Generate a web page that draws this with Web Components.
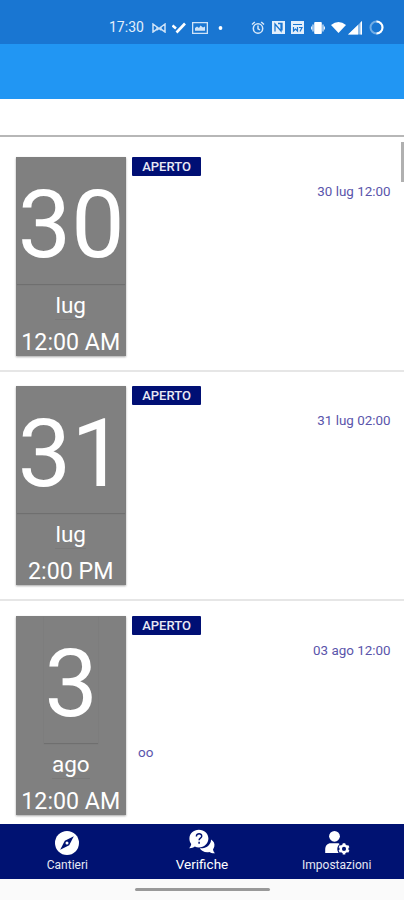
<!DOCTYPE html>
<html lang="it">
<head>
<meta charset="utf-8">
<meta name="viewport" content="width=device-width, initial-scale=1">
<title>Verifiche</title>
<style>
  html, body { height: 100%; }
  body {
    margin: 0;
    overflow: hidden;
    background: #fff;
    font-family: Roboto, "Liberation Sans", sans-serif;
  }
</style>
</head>
<body>
<app-screen>
  <status-bar slot="top" time="17:30"></status-bar>
  <check-item day="30" month="lug" time="12:00 AM" state="APERTO" date="30 lug 12:00"></check-item>
  <check-item day="31" month="lug" time="2:00 PM" state="APERTO" date="31 lug 02:00"></check-item>
  <check-item day="3" month="ago" time="12:00 AM" state="APERTO" date="03 ago 12:00">oo</check-item>
  <tab-bar slot="bottom">
    <tab-item icon="compass">Cantieri</tab-item>
    <tab-item icon="chat" active>Verifiche</tab-item>
    <tab-item icon="user">Impostazioni</tab-item>
  </tab-bar>
</app-screen>

<script>
class AppScreen extends HTMLElement {
  constructor() {
    super();
    this.attachShadow({ mode: "open" });
  }

  static get styles() {
    return /* css */`
      :host {
        display: flex;
        flex-direction: column;
        height: 900px;
        background: #fff;
      }

      .toolbar {
        flex: none;
        height: 55px;
        background: #2196f3;
      }

      .search {
        flex: none;
        box-sizing: border-box;
        height: 38px;
        border-bottom: 2px solid #b7b7b7;
      }

      .list {
        flex: 1;
        min-height: 0;
        overflow: hidden;
        position: relative;
      }

      .thumb {
        position: absolute;
        top: 5px;
        right: 0;
        width: 3px;
        height: 40px;
        background: #b0b0b0;
      }

      .gesture {
        flex: none;
        height: 21px;
        display: flex;
        justify-content: center;
        align-items: center;
        background: #fafafa;
      }

      .gesture span {
        width: 135px;
        height: 3px;
        border-radius: 2px;
        background: #999;
      }
    `;
  }

  connectedCallback() {
    this.shadowRoot.innerHTML = /* html */`
    <style>${AppScreen.styles}</style>
    <slot name="top"></slot>
    <div class="toolbar"></div>
    <div class="search"></div>
    <div class="list"><slot></slot><div class="thumb"></div></div>
    <slot name="bottom"></slot>
    <div class="gesture"><span></span></div>`;
  }
}

class StatusBar extends HTMLElement {
  constructor() {
    super();
    this.attachShadow({ mode: "open" });
  }

  static get styles() {
    return /* css */`
      :host {
        flex: none;
        box-sizing: border-box;
        height: 44px;
        padding: 11px 20px 0 109px;
        display: flex;
        justify-content: space-between;
        background: #1976d2;
        color: #e3effb;
        font-size: 14px;
        line-height: 33px;
      }

      div {
        display: flex;
        align-items: center;
        height: 33px;
      }

      .left svg { margin-right: 6px; }
      .right { gap: 6.5px; }
      .right .signal { margin-left: -5px; }
      time { margin-right: 8px; }
      svg { display: block; }
    `;
  }

  connectedCallback() {
    this.shadowRoot.innerHTML = /* html */`
    <style>${StatusBar.styles}</style>
    <div class="left">
      <time>${this.getAttribute("time")}</time>
      <svg width="14" height="10" viewBox="0 0 14 10" fill="none" stroke="#cfe3f7" stroke-width="1.5"><path d="M1 1l4 3v2L1 9zM13 1L9 4v2l4 3zM5 4l4 3M9 4L5 7"/></svg>
      <svg width="14" height="12" viewBox="0 0 14 12" fill="none" stroke="#fff" stroke-width="2.6"><path d="M.5 3.500L4 6.500M4.500 10.500l8.500-9"/></svg>
      <svg width="16" height="12" viewBox="0 0 16 12" fill="none" stroke="#cfe3f7" stroke-width="1.4"><path d="M.6.6h14.800v10.800H.6z"/><path d="M3 8.700V6l2-1.500 2 1.500 1.500-2.500L11 5.500l2-1v4.200z" fill="#cfe3f7" stroke="none"/></svg>
      <svg width="16" height="6" viewBox="0 0 16 6"><circle cx="6.5" cy="3" r="1.9" fill="#fff"/></svg>
    </div>
    <div class="right">
      <svg width="14" height="14" viewBox="0 0 14 14" fill="none" stroke="#d9e9f9" stroke-width="1.5"><circle cx="7" cy="7.5" r="4.7"/><path d="M7 4.500v3.300l2 1M1 3.500L3.800 1M13 3.500L10.200 1"/></svg>
      <svg width="13" height="13" viewBox="0 0 13 13"><path d="M0 0h13v13H0z" fill="#e3effb"/><path d="M3 10.500V3l6 7V2.500M6 2.500h4v7" fill="none" stroke="#1976d2" stroke-width="1.3"/></svg>
      <svg width="13" height="13" viewBox="0 0 13 13"><path d="M0 0h13v13H0z" fill="#e3effb"/><path d="M2 3.500h9M2.500 6v4l2-2 2 2V6M8 6.500h3l-2 4" fill="none" stroke="#1976d2" stroke-width="1.2"/></svg>
      <svg width="14" height="12" viewBox="0 0 14 12"><rect x="3.2" y="0" width="7.6" height="12" rx="1" fill="#fff"/><path d="M2 2.500v7M12 2.500v7M.5 4.500v3M13.500 4.500v3" stroke="#e3effb" stroke-width="1.2"/></svg>
      <svg width="15" height="11" viewBox="0 0 15 11"><path d="M0 3Q7.500-3 15 3L7.500 11z" fill="#fff"/></svg>
      <svg class="signal" width="15" height="14" viewBox="0 0 15 14"><path d="M0 13.500L14 0v13.500z" fill="#8cbbe9"/><path d="M0 13.500L10 4v9.500zM12.500 1.500L14 0v13.500h-1.500z" fill="#fff"/></svg>
      <svg width="15" height="15" viewBox="0 0 15 15" fill="none" stroke-width="2"><circle cx="7.5" cy="7.5" r="6" stroke="#72ade5"/><path d="M7.500 1.500a6 6 0 0 1 0 12" stroke="#fff"/></svg>
    </div>`;
  }
}

class CheckItem extends HTMLElement {
  constructor() {
    super();
    this.attachShadow({ mode: "open" });
  }

  static get styles() {
    return /* css */`
      :host {
        box-sizing: border-box;
        height: 229.3px;
        padding: 14.3px 13.5px 0 15.5px;
        display: flex;
        gap: 6px;
        border-bottom: 2px solid #e6e6e6;
      }

      :host(:first-of-type) { margin-top: 5.7px; }
      :host(:last-of-type) { border-bottom: 0; }

      .card {
        flex: none;
        width: 110.5px;
        height: 199px;
        display: flex;
        flex-direction: column;
        align-items: center;
        background: #808080;
        color: #fff;
        box-shadow: 0 1px 2px rgba(0, 0, 0, .35);
        font-size: 23.2px;
        white-space: nowrap;
      }

      .day {
        height: 127px;
        line-height: 136px;
        font-size: 95px;
        text-indent: 1px;
        box-shadow: 0 1px 1px rgba(0, 0, 0, .13);
      }

      .month {
        height: 35px;
        line-height: 42px;
        font-size: 22.5px;
        border-bottom: 1px solid #797979;
      }

      .time {
        margin-top: 8px;
        line-height: 28px;
      }

      .body {
        flex: 1;
        display: flex;
        flex-direction: column;
      }

      .badge {
        align-self: flex-start;
        width: 69px;
        height: 19px;
        border-radius: 1px;
        background: #000f74;
        color: #e8e9f5;
        font-size: 13px;
        font-weight: 500;
        line-height: 20px;
        text-align: center;
      }

      .date {
        align-self: flex-end;
        margin-top: 7px;
        font-size: 13.4px;
        line-height: 17px;
        color: #5a55ab;
      }

      .note {
        margin: 85px 0 0 6px;
        font-size: 13.5px;
        line-height: 16px;
        color: #5a55ab;
      }
    `;
  }

  connectedCallback() {
    const attr = name => this.getAttribute(name);
    this.shadowRoot.innerHTML = /* html */`
    <style>${CheckItem.styles}</style>
    <div class="card">
      <div class="day">${attr("day")}</div>
      <div class="month">${attr("month")}</div>
      <div class="time">${attr("time")}</div>
    </div>
    <div class="body">
      <div class="badge">${attr("state")}</div>
      <div class="date">${attr("date")}</div>
      <div class="note"><slot></slot></div>
    </div>`;
  }
}

class TabBar extends HTMLElement {
  constructor() {
    super();
    this.attachShadow({ mode: "open" });
  }

  connectedCallback() {
    this.shadowRoot.innerHTML = /* html */`
    <style>
      :host {
        flex: none;
        height: 55px;
        display: flex;
        background: #001272;
        color: #e6e8f4;
      }
    </style>
    <slot></slot>`;
  }
}

const ICONS = {
  compass: /* html */`<svg width="26" height="26" viewBox="0 0 26 26"><circle cx="13" cy="13" r="12" fill="#fff"/><path d="M19.800 6.200l-4.600 9-9 4.600 4.600-9z" fill="#001272"/><circle cx="13" cy="13" r="1.5" fill="#fff"/></svg>`,
  chat: /* html */`<svg width="26" height="26" viewBox="0 0 26 26"><path d="M22 10.500c2.800 1.700 4 4.200 3.300 7-.3 1.200-.8 2.100-1.300 2.900.4 1.600 1 2.800 2 3.900-2.300.2-4.200-.4-5.600-1.300-4 .9-8.400-.8-9.600-3.700 6 .5 11.400-3.200 11.200-8.800z" fill="#fff"/><path d="M9.900.8c5.300 0 9.500 3.800 9.500 8.800s-4.200 8.900-9.500 8.900c-1.500 0-2.900-.3-4.100-.9-1.500 1-3.400 1.700-5.600 1.600 1-1.200 1.800-2.700 2-4.300C1 13.500.4 11.700.4 9.600.4 4.600 4.600.8 9.900.8z" fill="#fff"/><path d="M7.400 7.400c0-3.600 5.500-3.300 5.300-.2-.1 2-2.600 1.800-2.600 4M10.100 12.800v1.900" fill="none" stroke="#001272" stroke-width="1.5"/></svg>`,
  user: /* html */`<svg width="26" height="26" viewBox="0 0 26 26"><circle cx="10.5" cy="6.3" r="5.4" fill="#fff"/><path d="M1.200 23v-3.500c0-4 2.200-6.300 5.600-6.300h6.800c1.200 0 1.600.4 2 .9-2.600 2.300-3 6-1 8.900z" fill="#fff"/><circle cx="20" cy="18.9" r="3.3" fill="none" stroke="#fff" stroke-width="2.5"/><path d="M20 13.300v2M20 22.500v2M15.200 16.100l1.700 1M23.100 20.700l1.700 1M15.200 21.700l1.700-1M23.100 17.100l1.700-1" stroke="#fff" stroke-width="2.6"/></svg>`
};

class TabItem extends HTMLElement {
  constructor() {
    super();
    this.attachShadow({ mode: "open" });
  }

  static get styles() {
    return /* css */`
      :host {
        flex: 1;
        display: flex;
        flex-direction: column;
        align-items: center;
        padding-top: 6px;
        font-size: 12px;
        line-height: 16px;
      }

      :host([active]) {
        padding-top: 5px;
        font-size: 13.5px;
        color: #fff;
      }

      svg { display: block; }
      span { margin-top: 1px; }
    `;
  }

  connectedCallback() {
    this.shadowRoot.innerHTML = /* html */`
    <style>${TabItem.styles}</style>
    ${ICONS[this.getAttribute("icon")]}
    <span><slot></slot></span>`;
  }
}

customElements.define("app-screen", AppScreen);
customElements.define("status-bar", StatusBar);
customElements.define("check-item", CheckItem);
customElements.define("tab-bar", TabBar);
customElements.define("tab-item", TabItem);
</script>
</body>
</html>
